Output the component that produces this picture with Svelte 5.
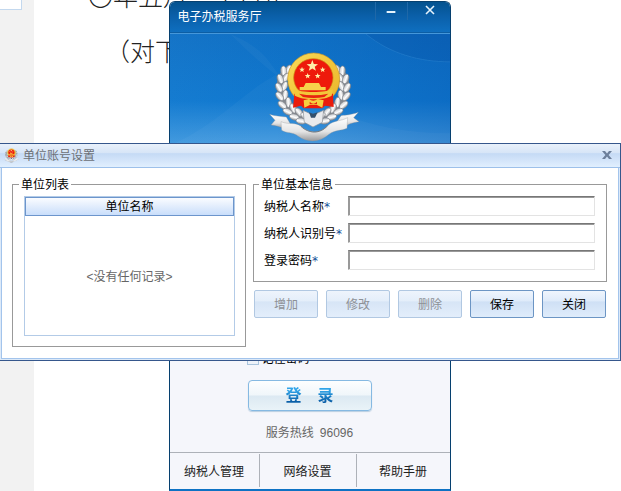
<script lang="ts">
    type Action = { label: string; disabled: boolean };

    const actions: Action[] = [
        { label: '增加', disabled: true },
        { label: '修改', disabled: true },
        { label: '删除', disabled: true },
        { label: '保存', disabled: false },
        { label: '关闭', disabled: false },
    ];

    const fields = [
        { id: 'payer-name', label: '纳税人名称', type: 'text' },
        { id: 'payer-id', label: '纳税人识别号', type: 'text' },
        { id: 'password', label: '登录密码', type: 'password' },
    ];

    const links = ['纳税人管理', '网络设置', '帮助手册'];

    // wheat ear: x, y, angle of each grain on the left side, mirrored for the right
    const grains = [
        [88, 134, 30], [74, 138, -5],
        [80, 158, 35], [64, 162, -20],
        [76, 184, 25], [60, 188, -30],
        [78, 210, 10], [62, 214, -40],
        [88, 232, -5], [70, 240, -50],
        [102, 250, -25], [86, 260, -65],
        [120, 262, -40], [106, 276, -75],
        [138, 274, -50], [126, 288, -80],
    ];

    const stars = [
        { x: 160, y: 123, r: 18 },
        { x: 129, y: 134, r: 9 },
        { x: 191, y: 134, r: 9 },
        { x: 146, y: 153, r: 9 },
        { x: 176, y: 153, r: 9 },
    ];

    function starPoints(cx: number, cy: number, r: number): string {
        const pts: string[] = [];
        for (let i = 0; i < 10; i++) {
            const a = -Math.PI / 2 + (i * Math.PI) / 5;
            const d = i % 2 ? r * 0.42 : r;
            pts.push(`${(cx + d * Math.cos(a)).toFixed(1)},${(cy + d * Math.sin(a)).toFixed(1)}`);
        }
        return pts.join(' ');
    }
</script>

{#snippet emblem(cls: string, id: string)}
    <svg class={cls} viewBox="24 78 282 273" aria-hidden="true">
        <defs>
            <linearGradient id="{id}-silver" x1="0" y1="0" x2="1" y2="0">
                <stop offset="0" stop-color="#9a9da1" />
                <stop offset="0.45" stop-color="#ffffff" />
                <stop offset="1" stop-color="#c4c6c9" />
            </linearGradient>
            <linearGradient id="{id}-ribbon" x1="0" y1="0" x2="0" y2="1">
                <stop offset="0" stop-color="#ffffff" />
                <stop offset="0.6" stop-color="#e4e4e4" />
                <stop offset="1" stop-color="#9b9b9d" />
            </linearGradient>
            <linearGradient id="{id}-gold" x1="0" y1="0" x2="1" y2="1">
                <stop offset="0" stop-color="#f9dc5c" />
                <stop offset="0.5" stop-color="#f3c63a" />
                <stop offset="1" stop-color="#e9b52c" />
            </linearGradient>
            <g id="{id}-ear">
                <path d="M88 136 C50 170 56 240 150 286" fill="none" stroke="#85898f" stroke-width="26" />
                {#each grains as [x, y, angle]}
                    <ellipse cx={x} cy={y} rx="9" ry="15" transform="rotate({angle} {x} {y})" fill="url(#{id}-silver)" stroke="#7d8188" stroke-width="2" />
                {/each}
            </g>
        </defs>
        <use href="#{id}-ear" />
        <use href="#{id}-ear" transform="translate(324 0) scale(-1 1)" />
        <path d="M132 256 L162 270 L194 256 L190 292 L162 306 L136 292 Z" fill="#e9eaec" stroke="#8a8f95" stroke-width="2" />
        <path d="M150 262 L162 266 L176 262 L168 278 L156 278 Z" fill="#33506c" />

        <path d="M32 268 C52 274 62 274 82 276 L96 300 L76 312 C62 304 50 302 36 300 L48 286 Z" fill="url(#{id}-ribbon)" stroke="#85898e" stroke-width="1" />
        <path d="M298 262 C276 270 262 270 246 272 L230 296 L250 310 C264 298 282 292 300 290 L284 278 Z" fill="url(#{id}-ribbon)" stroke="#85898e" stroke-width="1" />
        <path d="M66 290 C90 300 108 290 126 304 C150 326 182 328 206 302 C226 284 244 290 266 278 L264 310 C246 318 228 314 210 328 C184 352 146 354 118 334 C100 320 84 326 68 316 Z" fill="url(#{id}-ribbon)" stroke="#96989b" stroke-width="1" />
        <path d="M126 304 C150 326 182 328 206 302" fill="none" stroke="#75797e" stroke-width="3" />

        <circle cx="164" cy="162" r="78" fill="url(#{id}-gold)" stroke="#c9962a" stroke-width="2" />
        <path d="M106 206 L222 206 L224 246 L198 242 L190 250 L134 250 L126 242 L102 248 Z" fill="#ea1c0c" />
        <ellipse cx="163" cy="158" rx="59" ry="57" fill="#ee1a0b" stroke="#c98b15" stroke-width="2" />
        {#each stars as s}
            <polygon points={starPoints(s.x, s.y, s.r)} fill="#fff0a8" />
        {/each}
        <path d="M140 174 H180 L186 186 H200 V196 H122 V186 H134 Z" fill="#f7d24b" />
        <path d="M104 192 C126 204 200 204 222 192 L218 212 C196 226 132 226 108 212 Z" fill="#f3c63a" />
        <path d="M120 206 Q164 216 208 206 L196 216 Q164 222 132 216 Z" fill="#e8240f" />
        <path d="M134 226 L150 222 Q162 232 176 222 L194 226 L190 248 L174 240 H152 L136 248 Z" fill="#f7cf3f" />
        <path d="M152 230 Q163 242 174 230 V238 H152 Z" fill="#e8240f" />
    </svg>
{/snippet}

<div class="desktop">
    <aside class="gutter"><div class="panel-edge"></div></aside>
    <article class="document">
        <p>〇年五月二十日止</p>
        <p class="indent">（对下</p>
    </article>

    <section class="login-window" aria-label="电子办税服务厅">
        <header class="login-title">
            <h1>电子办税服务厅</h1>
            <button class="caption-btn minimize" aria-label="最小化">
                <svg viewBox="0 0 32 18" aria-hidden="true"><path d="M11 10H20" stroke="#e6f3fc" stroke-width="2" /></svg>
            </button>
            <button class="caption-btn" aria-label="关闭">
                <svg viewBox="0 0 42 18" aria-hidden="true"><path d="M18 4L26 12M26 4L18 12" stroke="#e6f3fc" stroke-width="1.6" /></svg>
            </button>
        </header>
        <div class="banner">
            <svg class="waves" viewBox="0 0 280 150" preserveAspectRatio="none" aria-hidden="true">
                <path d="M60 0 C90 12 98 26 108 40 C70 60 50 90 0 112 V150 H280 V100 C180 100 120 60 60 0Z" fill="#ffffff" opacity="0.03" />
                <path d="M196 0 C220 20 250 28 280 28 V0Z" fill="#003f8c" opacity="0.15" />
                <path d="M196 0 C220 20 250 28 280 28" fill="none" stroke="#4ba0e4" opacity="0.25" />
            </svg>
            {@render emblem('emblem', 'big')}
        </div>
        <form class="login-form">
            <label class="remember"><input type="checkbox" />记住密码</label>
            <button type="button" class="login-btn"><span>登　录</span></button>
            <p class="hotline">服务热线&ensp;96096</p>
        </form>
        <nav class="login-nav">
            {#each links as link}
                <a href="#top">{link}</a>
            {/each}
        </nav>
    </section>

    <div class="dialog" role="dialog" aria-labelledby="dialog-title">
        <div class="dialog-inner">
            <header class="dialog-title">
                {@render emblem('emblem-small', 'small')}
                <h2 id="dialog-title">单位账号设置</h2>
                <button class="dialog-close" aria-label="关闭窗口">
                    <svg viewBox="0 0 10 9" aria-hidden="true"><path d="M0 0H3L5 2.5L7 0H10L6.6 4L10 8H7L5 5.5L3 8H0L3.4 4Z" fill="#6c7f9b" /></svg>
                </button>
            </header>
            <div class="dialog-body">
                <fieldset class="list-group">
                    <legend>单位列表</legend>
                    <table>
                        <thead>
                            <tr><th>单位名称</th></tr>
                        </thead>
                        <tbody>
                            <tr><td>&lt;没有任何记录&gt;</td></tr>
                        </tbody>
                    </table>
                </fieldset>
                <div class="details">
                    <fieldset class="info-group">
                        <legend>单位基本信息</legend>
                        {#each fields as field (field.id)}
                            <div class="field">
                                <label for={field.id}>{field.label}<span class="required">*</span></label>
                                <input id={field.id} type={field.type} />
                            </div>
                        {/each}
                    </fieldset>
                    <div class="actions">
                        {#each actions as action (action.label)}
                            <button disabled={action.disabled}>{action.label}</button>
                        {/each}
                    </div>
                </div>
            </div>
        </div>
    </div>
</div>

<style>
    :global(body) {
        margin: 0;
        background: #fff;
    }

    .desktop {
        position: relative;
        display: flex;
        min-height: 100vh;
        overflow: hidden;
        font-family: "Liberation Sans", "Noto Sans CJK SC", sans-serif;
        font-size: 12px;
        line-height: 16px;
        color: #000;
    }
    .desktop * { box-sizing: border-box; }

    h1, h2, p {
        margin: 0;
        font-size: 12px;
        font-weight: normal;
    }

    button, input {
        margin: 0;
        padding: 0;
        font: inherit;
        color: inherit;
    }

    .gutter {
        width: 34px;
        background: #f2f2f2;
    }

    .panel-edge {
        width: 22px;
        height: 10px;
        background: #fff;
        border: solid #c3d8ee;
        border-width: 0 1px 1px 0;
    }

    .document {
        flex: 1;
        padding-left: 54px;
        color: #222;
        font-family: "Noto Sans CJK SC", sans-serif;
        white-space: nowrap;
    }
    .document p {
        margin-top: -23px;
        font-size: 25px;
        font-weight: 300;
        line-height: 36px;
    }
    .document .indent {
        margin-top: 19px;
        padding-left: 17px;
    }

    /* login window */
    .login-window {
        position: absolute;
        top: 1px;
        bottom: 0;
        left: 50%;
        display: flex;
        flex-direction: column;
        width: 282px;
        margin-left: -142px;
        background: #f5f6fb;
        border: 1px solid #06406f;
        border-bottom: 2px solid #0e72c4;
        border-radius: 6px 6px 0 0;
        overflow: hidden;
    }

    .login-title {
        display: flex;
        align-items: flex-start;
        height: 31px;
        padding-left: 8px;
        background: linear-gradient(#03528f, #0a5fa8 45%, #0f6fc0);
        border-bottom: 1px solid #0c5ea4;
        color: #fff;
    }
    .login-title h1 {
        flex: 1;
        padding-top: 7px;
    }

    .caption-btn {
        width: 42px;
        height: 18px;
        background: none;
        border: none;
    }
    .caption-btn svg { display: block; width: 100%; height: 18px; fill: none; }
    .caption-btn.minimize {
        width: 33px;
        border: solid #1f68a8;
        border-width: 0 1px;
    }

    .banner {
        position: relative;
        display: flex;
        justify-content: center;
        height: 150px;
        padding: 17px 0 0 8px;
        background: linear-gradient(100deg, rgba(70, 160, 225, 0.1), transparent 40%, rgba(0, 70, 160, 0.25)), linear-gradient(#0f6fc4, #1078cf 45%, #459bdf 75%);
        border-top: 1px solid #4597da;
    }
    .waves {
        position: absolute;
        inset: 0;
        width: 100%;
        height: 100%;
    }
    .emblem {
        position: relative;
        width: 94px;
        height: 91px;
    }

    .login-form {
        display: flex;
        flex: 1;
        flex-direction: column;
        align-items: center;
        justify-content: flex-end;
        padding-bottom: 11px;
    }

    .remember {
        display: flex;
        align-items: center;
        gap: 3px;
        width: 126px;
        margin-bottom: 13px;
    }
    .remember input {
        appearance: none;
        width: 12px;
        height: 12px;
        background: #edf2f9;
        border: 1px solid #a9c4dd;
    }

    .login-btn {
        width: 124px;
        height: 31px;
        padding-top: 2px;
        background: linear-gradient(#fdfeff, #f0f6fa 48%, #dce9f2 52%, #e9f3f8);
        border: 1px solid #86b9e2;
        border-radius: 4px;
        box-shadow: 0 1px 1px #b9cfe2;
    }
    .login-btn span {
        background: linear-gradient(#30a4e8 20%, #0a5fa8 85%);
        background-clip: text;
        color: transparent;
        font-size: 16px;
        font-weight: bold;
    }

    .hotline {
        margin-top: 14px;
        color: #666;
    }

    .login-nav {
        display: grid;
        grid-template-columns: 90fr 97fr 93fr;
        padding: 1px 0 2px;
        border-top: 1px solid #adb1b8;
    }
    .login-nav a {
        padding: 10px 0 7px;
        border-right: 1px solid #adb1b8;
        color: #222;
        text-align: center;
        text-decoration: none;
    }
    .login-nav a:last-child { border-right: none; }

    /* account dialog */
    .dialog {
        position: absolute;
        top: 143px;
        right: 0;
        left: -1px;
        padding: 0 1px 1px;
        background: #dce9f8;
        border: 1px solid #36578c;
    }

    .dialog-inner {
        background: #fff;
        border: solid #a3c4ec;
        border-width: 0 1px 1px;
    }

    .dialog-title {
        display: flex;
        align-items: center;
        height: 24px;
        padding: 0 7px 0 4px;
        margin: 0 -2px;
        background: linear-gradient(#e9f1fb, #d7e5f7 38%, #c5daf5 42%, #e1effe);
        border-bottom: 1px solid #9dc0ea;
    }
    .dialog-title h2 {
        flex: 1;
        padding-left: 4px;
        color: #6c7076;
    }
    .emblem-small {
        width: 15px;
        height: 15px;
    }
    .dialog-close {
        width: 12px;
        height: 12px;
        background: none;
        border: none;
    }
    .dialog-close svg { display: block; width: 10px; height: 9px; margin: auto; }

    .dialog-body {
        display: flex;
        gap: 7px;
        padding: 8px 11px 11px 10px;
    }

    fieldset {
        min-width: 0;
        margin: 0;
        border: 1px solid #999;
    }
    legend {
        margin-left: -5px;
        padding: 1px 2px 0;
    }

    .list-group {
        width: 234px;
        padding: 3px 10px 10px 11px;
    }

    table {
        width: 100%;
        height: 140px;
        border: 1px solid #b3cbe7;
        border-spacing: 0;
    }
    th {
        height: 19px;
        padding: 1px 0 0;
        background: linear-gradient(#fafcff, #dfebfc 55%, #c9defb);
        border: 1px solid #6c95cc;
        font-weight: normal;
    }
    td {
        padding: 2px 0 0;
        color: #666;
        text-align: center;
    }

    .details { flex: 1; }

    .info-group {
        padding: 3px 11px 11px 10px;
    }

    .field {
        display: flex;
        align-items: center;
        height: 20px;
    }
    .field + .field { margin-top: 7px; }
    .field label {
        width: 84px;
        padding-top: 1px;
        white-space: nowrap;
    }
    .field input {
        flex: 1;
        min-width: 0;
        height: 20px;
        background: #fff;
        border: 1px solid;
        border-color: #777 #e3e3e3 #e3e3e3 #999;
        border-radius: 0;
        box-shadow: inset 1px 1px 0 #999;
    }
    .required {
        color: #0f4f98;
        font-family: "DejaVu Sans", sans-serif;
        line-height: 12px;
    }

    .actions {
        display: flex;
        gap: 8px;
        padding: 8px 1px 0;
    }
    .actions button {
        flex: 1;
        height: 28px;
        padding-top: 2px;
        background: linear-gradient(#eff5fd, #dfebfa 38%, #cfe0f5 42%, #dfecfb);
        border: 1px solid #6c95c4;
        border-radius: 2px;
    }
    .actions button:disabled {
        background: linear-gradient(#eef4fc, #e4eefa 38%, #d7e5f6 42%, #e3eefb);
        border-color: #b1c8e2;
        color: #8e9196;
    }
</style>
